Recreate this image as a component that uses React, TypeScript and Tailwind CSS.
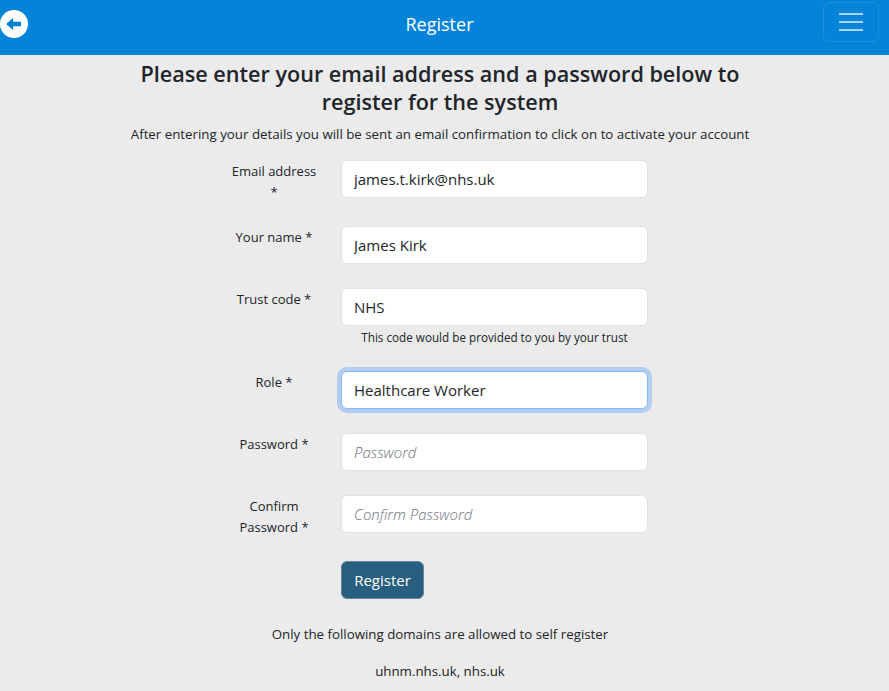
import React from 'react';

const font = "[font-family:'Open_Sans','Noto_Sans',sans-serif]";

function Field({ label, value, placeholder, focused, hint, className }: {
  label: React.ReactNode;
  value?: string;
  placeholder?: string;
  focused?: boolean;
  hint?: string;
  className?: string;
}) {
  return (
    <div className={`flex items-start ${className || ''}`}>
      <label className="w-[100px] shrink-0 px-[5px] pt-[1px] text-center text-[13px] leading-[21px] text-[#212529]">{label}</label>
      <div className="ml-[17px] w-[307px]">
        <input
          readOnly
          type="text"
          value={value}
          placeholder={placeholder}
          className={
            'block h-[38px] w-full rounded-[6px] border bg-white px-[12px] text-[15px] text-[#212529] outline-none placeholder:font-light placeholder:italic placeholder:text-[#6c757d] ' +
            (focused
              ? 'border-[#86b7fe] shadow-[0_0_0_4px_rgba(13,110,253,0.25)]'
              : 'border-[#dee2e6]')
          }
        />
        {hint && <p className="mt-[2px] text-center text-[11.7px] leading-[18px] text-[#212529]">{hint}</p>}
      </div>
    </div>
  );
}

export default function App() {
  return (
    <div className={`h-[691px] overflow-hidden bg-[#ebebeb] ${font}`}>
      {/* Top bar */}
      <header className="flex h-[55px] items-center justify-between bg-[#0484d9]">
        <div className="w-[80px]">
          <button className="flex h-[28px] w-[28px] -translate-y-[4px] items-center justify-center rounded-full bg-white">
            <svg viewBox="0 0 16 16" className="h-[16px] w-[16px]" fill="#0484d9">
              <path d="M0 8 L7 2 V5.7 H15 V10.3 H7 V14 Z" />
            </svg>
          </button>
        </div>
        <h1 className="-translate-x-[5px] -translate-y-[3px] text-[18px] text-white">Register</h1>
        <div className="flex w-[80px] justify-end">
          <button className="mr-[10px] flex h-[40px] w-[56px] -translate-y-[6px] flex-col items-center justify-center gap-[6px] rounded-[6px] border border-[#1e90dc]">
            <span className="h-[2px] w-[24px] bg-[#a9d6f3]" />
            <span className="h-[2px] w-[24px] bg-[#a9d6f3]" />
            <span className="h-[2px] w-[24px] bg-[#a9d6f3]" />
          </button>
        </div>
      </header>

      {/* Intro */}
      <div className="ml-[130px] w-[620px] pt-[5px] text-center text-[#212529]">
        <h2 className="text-[21.6px] font-semibold leading-[28px]">
          Please enter your email address and a password below to
          <br />
          register for the system
        </h2>
        <p className="mt-[8px] whitespace-nowrap text-[13.3px] leading-[21px]">
          After entering your details you will be sent an email confirmation to click on to activate your account
        </p>
      </div>

      {/* Form */}
      <form className="ml-[224px] mt-[15px] w-[424px]">
        <Field label="Email address *" value="james.t.kirk@nhs.uk" />
        <Field className="mt-[23px]" label="Your name *" value="James Kirk" />
        <Field
          className="mt-[24px]"
          label="Trust code *"
          value="NHS"
          hint="This code would be provided to you by your trust"
        />
        <Field className="mt-[25px]" label="Role *" value="Healthcare Worker" focused />
        <Field className="mt-[24px]" label="Password *" placeholder="Password" />
        <Field className="mt-[24px]" label={<>Confirm<br />Password *</>} placeholder="Confirm Password" />
        <button
          type="button"
          className="ml-[117px] mt-[23px] h-[38px] w-[83px] rounded-[6px] border border-[#6c8598] bg-[#285e80] text-[15px] text-white"
        >
          Register
        </button>
      </form>

      {/* Footer note */}
      <div className="ml-[130px] w-[620px] text-center text-[13.3px] leading-[21px] text-[#212529]">
        <p className="mt-[25px]">Only the following domains are allowed to self register</p>
        <p className="mt-[16px]">uhnm.nhs.uk, nhs.uk</p>
      </div>
    </div>
  );
}
